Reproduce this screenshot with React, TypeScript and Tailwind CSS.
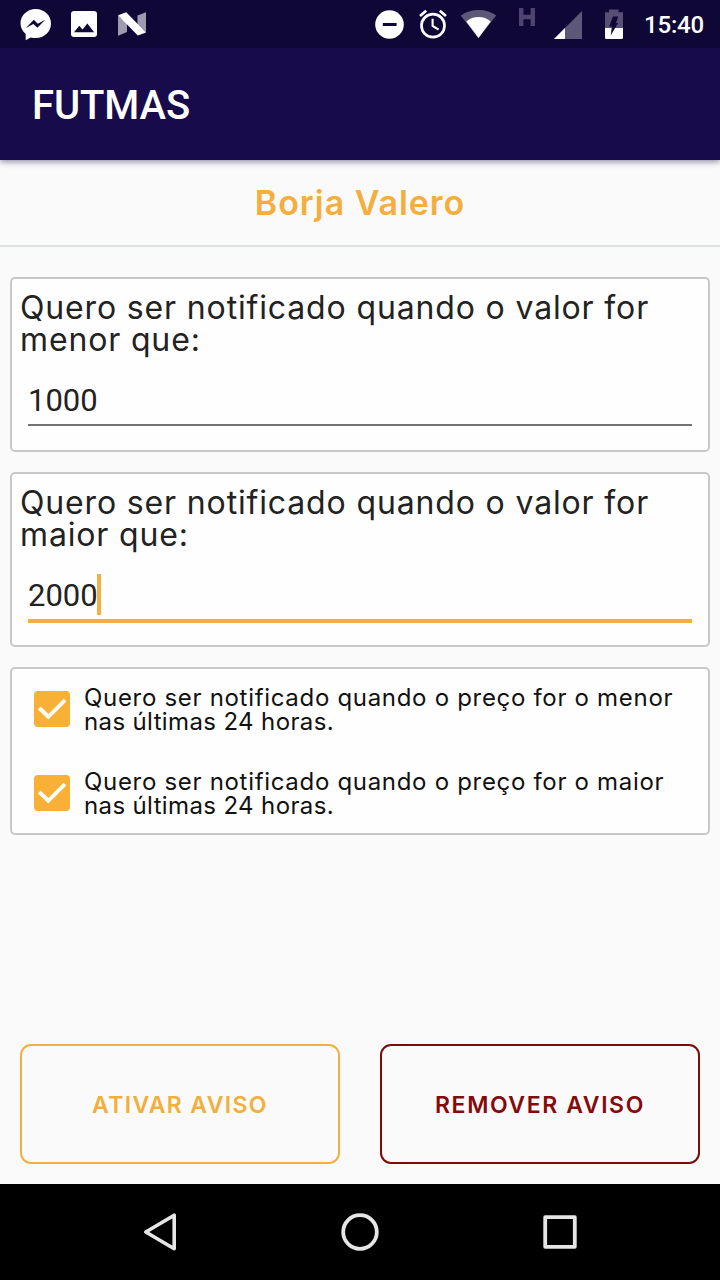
import { useState } from "react";
import type { ReactNode } from "react";

const checks = [
  { id: "menor", lines: ["Quero ser notificado quando o preço for o menor", "nas últimas 24 horas."] },
  { id: "maior", lines: ["Quero ser notificado quando o preço for o maior", "nas últimas 24 horas."] },
];

function StatusBar() {
  return (
    <div className="flex h-12 items-start bg-[#0f0736] text-white">
      {/* Notifications */}
      <svg className="ml-5 h-12 w-8" viewBox="20 0 32 48" fill="currentColor">
        <path d="M35.800 9C27.200 9 20.500 15.400 20.500 23.300c0 4.300 2 8 5.200 10.600v6.300l5-2.800c1.600.5 3.300.7 5.100.7C44.400 38.100 51 31.600 51 23.500S44.400 9 35.800 9z" />
        <path d="M26 28l7.800-8.200 4 3.900 7.400-3.900-7.800 8-4.100-3.900z" fill="#0f0736" />
      </svg>
      <svg className="ml-[18px] h-12 w-7" viewBox="70 0 28 48" fill="currentColor">
        <rect x="71" y="11" width="26" height="26" rx="3" />
        <path d="M74 32.300l5.300-6.600 3.200 3.800 4.900-6 6.700 8.800z" fill="#0f0736" />
      </svg>
      <svg className="ml-[18px] h-12 w-8" viewBox="116 0 32 48" fill="currentColor">
        <path d="M118 15.500v20.300l9-3.700v-9z" opacity="0.6" />
        <path d="M146 12.300v20.100l-8.500-8.300v-8.500z" opacity="0.6" />
        <path d="M118 15.300l8.200-3 19.800 20.200-8.200 3z" />
      </svg>

      {/* System */}
      <svg className="ml-auto h-12 w-[30px]" viewBox="375 0 30 48">
        <circle cx="389.500" cy="24.500" r="14.300" fill="currentColor" />
        <path d="M382.800 24.500h13.800" stroke="#0f0736" strokeWidth="3" />
      </svg>
      <svg className="ml-3.5 h-12 w-7" viewBox="419 0 28 48" fill="none" stroke="currentColor" strokeWidth="2.700">
        <circle cx="433" cy="25.700" r="11.500" />
        <path d="M432.600 18.800v7.200l6 3.600" strokeWidth="2.100" />
        <path d="M420 16l6.200-5.200M446 16l-6.200-5.200" />
      </svg>
      <svg className="ml-3.5 h-12 w-9" viewBox="461 0 36 48" fill="currentColor">
        <path d="M460.700 15.600C465.500 12 471.500 10 478.500 10s13 2 17.800 5.600L478.500 38z" opacity="0.33" />
        <path d="M466.300 21.500c3.500-2.900 7.600-4.400 12.200-4.400s8.700 1.500 12.200 4.400L478.500 38z" />
      </svg>
      <svg className="ml-[21px] h-12 w-[18px]" viewBox="518 0 18 48" fill="none" stroke="#4d4570" strokeWidth="4.400">
        <path d="M521.200 8v18M532.800 8v18M521 17h12" />
      </svg>
      <svg className="ml-[18px] h-12 w-7" viewBox="554 0 28 48" fill="currentColor">
        <path d="M582 11v28h-28z" opacity="0.33" />
        <path d="M565 28v11h-11z" />
      </svg>
      <svg className="ml-[22px] h-12 w-5" viewBox="604 0 20 48">
        <path d="M609 9.500h9.500v2.800h4.500V28h-18V12.300h4z" fill="#574f76" />
        <path d="M605 28h18v9.500q0 1.500-1.500 1.500h-15q-1.500 0-1.500-1.500z" fill="currentColor" />
        <path d="M613 16.500h5.200L616 23h2l-7.300 12.500 1.200-9h-2.700z" fill="#0f0736" />
      </svg>
      <span className="mt-[11px] ml-5 mr-4 w-[60px] text-2xl leading-7 font-medium tracking-[-0.2px]">15:40</span>
    </div>
  );
}

function Card({ className = "", children }: { className?: string; children: ReactNode }) {
  return (
    <div className={`rounded-[5px] border-2 border-[#c8c8c8] bg-[#fefefe] ${className}`}>{children}</div>
  );
}

function ValueCard({ label, value, focused = false }: { label: string; value: string; focused?: boolean }) {
  return (
    <Card className="h-[175px] px-2 pt-[13px]">
      <p className="font-[Inter,sans-serif] text-[32px] leading-8 font-normal tracking-[0.85px] text-[#222]">
        {label}
      </p>
      <div
        className={
          focused
            ? "mx-2 mt-[22px] flex h-[50px] border-b-4 border-[#f2af3c]"
            : "mx-2 mt-[22px] flex h-12 border-b-2 border-[#737373]"
        }
      >
        <span className="text-[31px] leading-[45px] text-[#222]">{value}</span>
        {focused && <span className="mt-px -ml-px h-[41px] w-1 bg-[#f0b145]" />}
      </div>
    </Card>
  );
}

export default function App() {
  const [checked, setChecked] = useState<Record<string, boolean>>({ menor: true, maior: true });

  return (
    <div className="flex h-[1280px] w-[720px] flex-col overflow-hidden bg-[#fafafa] font-[Roboto,sans-serif]">
      <header className="relative bg-[#170b4b] shadow-[0_2px_6px_rgba(23,11,75,0.45)]">
        <StatusBar />
        <h1 className="h-28 pt-[33px] pl-8 text-[40px] leading-[50px] font-medium tracking-[-0.1px] text-white">
          FUTMAS
        </h1>
      </header>

      <h2 className="h-[87px] border-b-2 border-[#dce0e1] pt-[23px] text-center font-[Inter,sans-serif] text-[34px] leading-10 font-semibold tracking-[0.95px] text-[#f4ae3d]">
        Borja Valero
      </h2>

      <main className="flex flex-col gap-5 px-2.5 pt-[30px]">
        <ValueCard label="Quero ser notificado quando o valor for menor que:" value="1000" />
        <ValueCard label="Quero ser notificado quando o valor for maior que:" value="2000" focused />

        <Card className="flex h-[168px] flex-col gap-9 pt-[17px] pl-[22px]">
          {checks.map((c) => (
            <label key={c.id} className="flex h-12 items-start">
              <input
                type="checkbox"
                className="sr-only"
                checked={checked[c.id]}
                onChange={(e) => setChecked({ ...checked, [c.id]: e.target.checked })}
              />
              <span className="mt-[5px] mr-3.5 h-9 w-9 rounded-[4px] bg-[#f9b036]">
                {checked[c.id] && (
                  <svg viewBox="0 0 36 36" fill="none" stroke="#fffdf5" strokeWidth="4">
                    <path d="M5.300 17l9 8.800L31 9.200" />
                  </svg>
                )}
              </span>
              <span className="font-[Inter,sans-serif] text-2xl leading-6 whitespace-nowrap text-[#111]">
                <span className="block tracking-[0.69px]">{c.lines[0]}</span>
                <span className="block tracking-[0.37px]">{c.lines[1]}</span>
              </span>
            </label>
          ))}
        </Card>
      </main>

      <div className="mt-auto grid grid-cols-2 gap-10 px-5 pb-5">
        <button
          type="button"
          className="h-[120px] rounded-[11px] border-2 border-[#f2af45] pt-0.5 font-[Inter,sans-serif] text-[23px] font-semibold tracking-[1.35px] text-[#f2af3c]"
        >
          ATIVAR AVISO
        </button>
        <button
          type="button"
          className="h-[120px] rounded-[11px] border-2 border-[#7c0c04] pt-0.5 font-[Inter,sans-serif] text-[23px] font-semibold tracking-[1.6px] text-[#840a0c]"
        >
          REMOVER AVISO
        </button>
      </div>

      <nav className="flex h-24 items-center justify-center gap-40 bg-black text-[#e6e6e6]">
        <svg className="h-10 w-10" viewBox="0 0 40 40" fill="none" stroke="currentColor" strokeWidth="3.600" strokeLinejoin="round">
          <path d="M34.200 3.200v33.600L5.800 20z" />
        </svg>
        <svg className="h-10 w-10" viewBox="0 0 40 40" fill="none" stroke="currentColor" strokeWidth="3.800">
          <circle cx="20" cy="20" r="16.800" />
        </svg>
        <svg className="h-10 w-10" viewBox="0 0 40 40" fill="none" stroke="currentColor" strokeWidth="3.800" strokeLinejoin="round">
          <rect x="5.200" y="5.200" width="29.600" height="29.600" />
        </svg>
      </nav>
    </div>
  );
}
